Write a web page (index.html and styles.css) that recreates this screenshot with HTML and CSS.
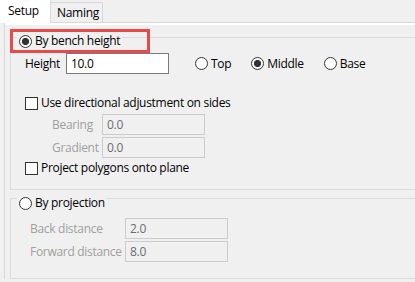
FILE: index.html
```html
<!DOCTYPE html>
<html lang="en">
<head>
    <meta charset="UTF-8">
    <title>Bench setup</title>
    <link rel="stylesheet" href="styles.css">
</head>
<body>
    <div class="tabs">
        <div class="tab tab-active">Setup</div>
        <div class="tab">Naming</div>
    </div>
    <div class="panel">
        <div class="panel-body">
            <div class="group group-bench">
                <label class="legend legend-marked"><input type="radio" name="mode" checked>By bench height</label>
                <div class="row-height">
                    <label class="height-label" for="height">Height</label>
                    <input id="height" class="text-input" value="10.0">
                    <div class="options">
                        <label class="option"><input type="radio" name="pos">Top</label>
                        <label class="option"><input type="radio" name="pos" checked>Middle</label>
                        <label class="option"><input type="radio" name="pos">Base</label>
                    </div>
                </div>
                <label class="check-row check-first"><input type="checkbox">Use directional adjustment on sides</label>
                <div class="fields fields-bench">
                    <div class="field-row">
                        <span class="field-label">Bearing</span>
                        <input class="text-input" value="0.0" disabled>
                    </div>
                    <div class="field-row">
                        <span class="field-label">Gradient</span>
                        <input class="text-input" value="0.0" disabled>
                    </div>
                </div>
                <label class="check-row check-last"><input type="checkbox">Project polygons onto plane</label>
            </div>
            <div class="group group-projection">
                <label class="legend"><input type="radio" name="mode">By projection</label>
                <div class="fields fields-projection">
                    <div class="field-row">
                        <span class="field-label">Back distance</span>
                        <input class="text-input" value="2.0" disabled>
                    </div>
                    <div class="field-row">
                        <span class="field-label">Forward distance</span>
                        <input class="text-input" value="8.0" disabled>
                    </div>
                </div>
            </div>
        </div>
    </div>
</body>
</html>
```

FILE: styles.css
```css
body {
    margin: 0;
    height: 282px;
    overflow: hidden;
    background: #f0f0f0;
    font-family: "Open Sans", "Noto Sans", sans-serif;
    font-size: 12px;
    line-height: 16px;
    letter-spacing: -0.3px;
    color: #000;
}

.tabs {
    display: flex;
    align-items: flex-end;
    height: 22px;
}

.tab {
    box-sizing: border-box;
    height: 20px;
    width: 52px;
    padding-left: 6px;
    line-height: 20px;
    border-top: 1px solid #d9d9d9;
    border-right: 1px solid #d9d9d9;
}

.tab-active {
    position: relative;
    z-index: 1;
    width: 51px;
    height: 23px;
    margin-bottom: -1px;
    padding-left: 8px;
    line-height: 22px;
    background: #fff;
    border-top: none;
}

.panel {
    margin-left: 4px;
    border-top: 1px solid #d9d9d9;
    border-left: 1px solid #d9d9d9;
}

.panel-body {
    border-top: 2px solid #fff;
    padding-top: 12px;
}

.group {
    margin-left: 5px;
    border: 1px solid #dcdcdc;
    border-right: none;
}

.group-bench {
    padding-bottom: 13px;
}

.group-projection {
    margin-top: 8px;
    padding-bottom: 16px;
}

.legend {
    position: relative;
    display: flex;
    align-items: center;
    width: fit-content;
    height: 18px;
    margin: -6px 0 0 6px;
    padding: 0 2px;
    background: #f0f0f0;
}

.group-projection .legend {
    margin-top: -5px;
}

/* red highlight drawn round the first option */
.legend-marked::after {
    content: "";
    position: absolute;
    left: -7px;
    top: -3px;
    width: 134px;
    height: 18px;
    border: 3px solid #e64a4a;
}

input[type="radio"],
input[type="checkbox"] {
    appearance: none;
    flex: none;
    box-sizing: border-box;
    width: 13px;
    height: 13px;
    margin: 0 3px 0 0;
    border: 1px solid #333;
    background: #fff;
}

input[type="radio"] {
    border-radius: 50%;
}

input[type="radio"]:checked {
    background: radial-gradient(circle, #333 0 3.3px, #fff 3.9px);
}

.row-height {
    display: flex;
    align-items: center;
    height: 21px;
    margin-top: 3px;
    padding-left: 14px;
}

.height-label {
    width: 41px;
}

.text-input {
    box-sizing: border-box;
    width: 103px;
    height: 21px;
    margin: 0;
    padding: 0 4px;
    border: 1px solid #7a7a7a;
    background: #fff;
    font: inherit;
    letter-spacing: inherit;
    color: #000;
    outline: none;
}

.text-input:disabled {
    border-color: #cccccc;
    background: #f0f0f0;
    color: #6d6d6d;
}

.options {
    display: flex;
    gap: 20px;
    margin-left: 26px;
}

.option {
    display: flex;
    align-items: center;
}

.check-row {
    display: flex;
    align-items: center;
    height: 16px;
    padding-left: 14px;
}

.check-first {
    margin-top: 21px;
}

.check-last {
    margin-top: 2px;
}

.fields {
    display: flex;
    flex-direction: column;
    gap: 2px;
}

.fields-bench {
    margin-top: 3px;
    padding-left: 41px;
}

.fields-projection {
    margin-top: 6px;
    padding-left: 19px;
}

.field-row {
    display: flex;
    align-items: center;
}

.field-label {
    flex: none;
    white-space: nowrap;
    color: #a0a0a0;
}

.fields-bench .field-label {
    width: 50px;
}

.fields-projection .field-label {
    width: 95px;
}
```
